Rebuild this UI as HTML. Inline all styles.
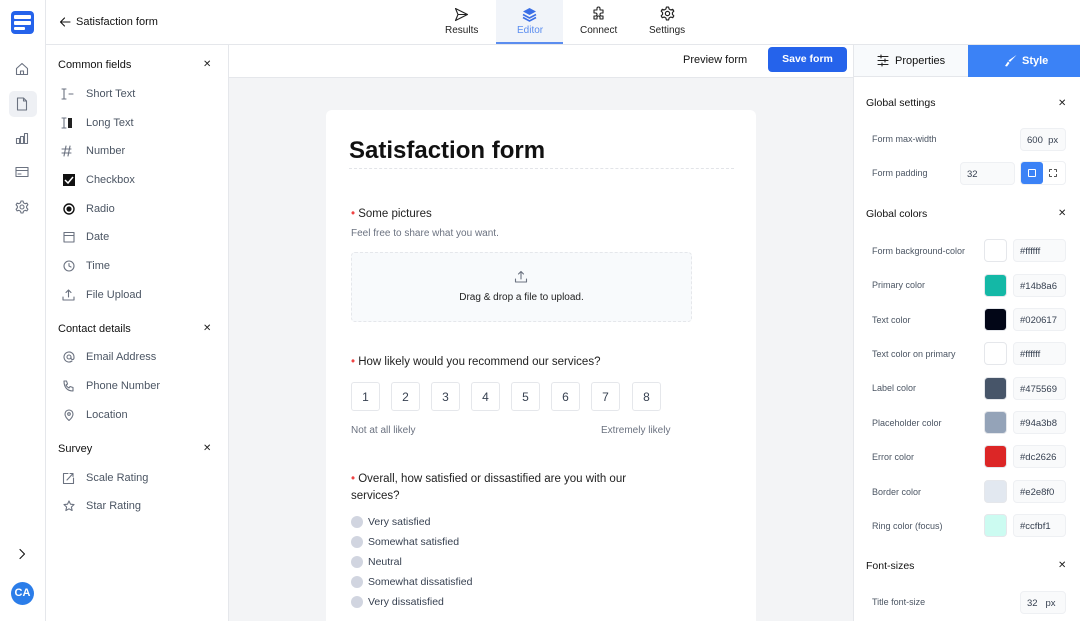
<!DOCTYPE html>
<html><head><meta charset="utf-8"><style>
*{box-sizing:border-box;margin:0;padding:0}
body{width:1080px;height:621px;overflow:hidden;font-family:"Liberation Sans",sans-serif;background:#fff;color:#111827;position:relative}
.a{position:absolute}
.t{font-size:11px;color:#374151;white-space:nowrap}
svg{display:block}
.ic{stroke:#6b7280;fill:none;stroke-width:1.1;stroke-linecap:round;stroke-linejoin:round}
.fld{position:absolute;left:60px;font-size:11px;color:#4b5563}
.fld span{position:absolute;left:26px;top:0;white-space:nowrap}
.x{position:absolute;font-size:10px;color:#222}
.row{position:absolute;left:872px;font-size:9px;color:#4b5563;white-space:nowrap}
.sw{position:absolute;left:984px;width:23px;height:23px;border-radius:4px;border:1px solid #e5e7eb}
.hx{position:absolute;left:1013px;width:53px;height:23px;border-radius:4px;border:1px solid #eef0f3;background:#f9fafb;font-size:9.5px;color:#374151;padding:6px 0 0 6px}
.nb{position:absolute;top:382px;width:29px;height:29px;border:1px solid #e5e7eb;border-radius:3px;font-size:12px;color:#374151;text-align:center;line-height:28px}
.rd{position:absolute;left:351px;font-size:10.5px;color:#374151}
.rd i{position:absolute;left:0;top:0;width:12px;height:12px;border-radius:50%;background:#d1d5e0}
.rd span{position:absolute;left:17px;top:0;white-space:nowrap}
</style></head><body>
<!-- rail -->
<div class="a" style="left:0;top:0;width:46px;height:621px;border-right:1px solid #e5e7eb"></div>
<div class="a" style="left:11px;top:11px;width:23px;height:23px;border-radius:4px;background:#2563eb"></div>
<div class="a" style="left:14px;top:15px;width:17px;height:4px;background:#fff;border-radius:1px"></div>
<div class="a" style="left:14px;top:21px;width:17px;height:4px;background:#fff;border-radius:1px"></div>
<div class="a" style="left:14px;top:27px;width:11px;height:3px;background:#fff;border-radius:1px"></div>
<svg class="a" style="left:15px;top:62px" width="14" height="14" viewBox="0 0 14 14"><path class="ic" d="M1.5 6.5L7 1.5l5.5 5V12.5h-11z M5.5 12.5V9h3v3.5"/></svg>
<div class="a" style="left:9px;top:91px;width:28px;height:26px;border-radius:5px;background:#eef0f4"></div>
<svg class="a" style="left:16px;top:97px" width="12" height="14" viewBox="0 0 12 14"><path class="ic" d="M1.5 1h6l3 3v9h-9z M7.5 1v3h3"/></svg>
<svg class="a" style="left:15px;top:131px" width="14" height="14" viewBox="0 0 14 14"><path class="ic" d="M1.5 12.5v-5h3v5z M5.5 12.5v-7h3v7z M9.5 12.5v-10h3v10z"/></svg>
<svg class="a" style="left:15px;top:166px" width="14" height="12" viewBox="0 0 14 12"><path class="ic" d="M1 1.5h12v9H1z M1 4.5h12 M3 8h3"/></svg>
<svg class="a" style="left:15px;top:200px" width="14" height="14" viewBox="0 0 14 14"><circle class="ic" cx="7" cy="7" r="2"/><path class="ic" d="M6 1h2l.5 1.8 1.6.9 1.8-.6 1 1.7-1.3 1.4v1.6l1.3 1.4-1 1.7-1.8-.6-1.6.9L8 13H6l-.5-1.8-1.6-.9-1.8.6-1-1.7L2.4 7.8V6.2L1.1 4.8l1-1.7 1.8.6 1.6-.9z"/></svg>
<svg class="a" style="left:18px;top:548px" width="8" height="12" viewBox="0 0 8 12"><path class="ic" d="M2 1.5l4.5 4.5L2 10.5" style="stroke:#111"/></svg>
<div class="a" style="left:11px;top:582px;width:23px;height:23px;border-radius:50%;background:#2b7de9;color:#fff;font-size:11px;font-weight:bold;text-align:center;line-height:23px">CA</div>
<!-- header -->
<div class="a" style="left:46px;top:44px;width:1034px;height:1px;background:#e5e7eb"></div>
<svg class="a" style="left:59px;top:16px" width="12" height="12" viewBox="0 0 12 12"><path class="ic" d="M11 6H1.5M5.5 2L1.5 6l4 4" style="stroke:#111"/></svg>
<div class="a t" style="left:76px;top:16px;color:#111">Satisfaction form</div>
<div class="a" style="left:496px;top:0;width:67px;height:44px;background:#f1f4f9;border-bottom:2px solid #5b8def"></div>
<svg class="a" style="left:454px;top:7px" width="15" height="15" viewBox="0 0 15 15"><path class="ic" d="M1.5 1.5l12 6-12 6 2.5-6z M4 7.5h9" style="stroke:#222"/></svg>
<div class="a" style="left:445px;top:25px;font-size:10px;color:#222">Results</div>
<svg class="a" style="left:522px;top:7px" width="15" height="15" viewBox="0 0 15 15"><path d="M7.5 1L14 4.5 7.5 8 1 4.5z" fill="#3b6fe6"/><path d="M1 7.5l6.5 3.5L14 7.5 M1 10.5L7.5 14 14 10.5" stroke="#3b6fe6" fill="none" stroke-width="1.6"/></svg>
<div class="a" style="left:517px;top:25px;font-size:10px;color:#5b8def">Editor</div>
<svg class="a" style="left:591px;top:6px" width="15" height="15" viewBox="0 0 15 15"><path class="ic" d="M3 4h3V2.5a1.5 1.5 0 013 0V4h3v3h-1.5a1.5 1.5 0 000 3H12v3H9v-1.5a1.5 1.5 0 00-3 0V13H3v-3h1.5a1.5 1.5 0 000-3H3z" style="stroke:#222"/></svg>
<div class="a" style="left:580px;top:25px;font-size:10px;color:#222">Connect</div>
<svg class="a" style="left:660px;top:6px" width="15" height="15" viewBox="0 0 14 14"><circle class="ic" cx="7" cy="7" r="2" style="stroke:#222"/><path class="ic" style="stroke:#222" d="M6 1h2l.5 1.8 1.6.9 1.8-.6 1 1.7-1.3 1.4v1.6l1.3 1.4-1 1.7-1.8-.6-1.6.9L8 13H6l-.5-1.8-1.6-.9-1.8.6-1-1.7L2.4 7.8V6.2L1.1 4.8l1-1.7 1.8.6 1.6-.9z"/></svg>
<div class="a" style="left:649px;top:25px;font-size:10px;color:#222">Settings</div>
<!-- left panel -->
<div class="a" style="left:228px;top:45px;width:1px;height:576px;background:#e5e7eb"></div>
<div class="a t" style="left:58px;top:59px;color:#111">Common fields</div><div class="x" style="left:203px;top:59px">✕</div>
<div class="fld" style="top:88px"><svg width="16" height="12" viewBox="0 0 16 12"><path class="ic" d="M2 1h4M2 11h4M4 1v10M9 6h4"/></svg><span>Short Text</span></div>
<div class="fld" style="top:117px"><svg width="16" height="12" viewBox="0 0 16 12"><path class="ic" d="M2 1h4M2 11h4M4 1v10"/><rect x="8" y="1" width="4" height="10" fill="#222"/></svg><span>Long Text</span></div>
<div class="fld" style="top:145px"><svg width="16" height="12" viewBox="0 0 16 12"><path class="ic" d="M4 11L6 1M8 11l2-10M2 4h9M2 8h9"/></svg><span>Number</span></div>
<div class="fld" style="top:174px"><svg width="16" height="12" viewBox="0 0 16 12"><rect x="3" y="0" width="12" height="12" fill="#111"/><path d="M5 6l3 3 5-6" stroke="#fff" stroke-width="1.5" fill="none"/></svg><span>Checkbox</span></div>
<div class="fld" style="top:203px"><svg width="16" height="12" viewBox="0 0 16 12"><circle cx="9" cy="6" r="5" stroke="#111" stroke-width="1.4" fill="none"/><circle cx="9" cy="6" r="2.6" fill="#111"/></svg><span>Radio</span></div>
<div class="fld" style="top:231px"><svg width="16" height="12" viewBox="0 0 16 12"><path class="ic" d="M4 1.5h10v9.5H4z M4 4.5h10"/></svg><span>Date</span></div>
<div class="fld" style="top:260px"><svg width="16" height="12" viewBox="0 0 16 12"><circle class="ic" cx="9" cy="6" r="5"/><path class="ic" d="M9 3.5V6l2 1"/></svg><span>Time</span></div>
<div class="fld" style="top:289px"><svg width="16" height="12" viewBox="0 0 16 12"><path class="ic" d="M3 8v3h11V8M8.5 8V1M6 3.5l2.5-2.5L11 3.5"/></svg><span>File Upload</span></div>
<div class="a t" style="left:58px;top:323px;color:#111">Contact details</div><div class="x" style="left:203px;top:323px">✕</div>
<div class="fld" style="top:351px"><svg width="16" height="12" viewBox="0 0 16 12"><circle class="ic" cx="9" cy="6" r="2"/><path class="ic" d="M11 6v1a1.5 1.5 0 003 0V6a5 5 0 10-2 4"/></svg><span>Email Address</span></div>
<div class="fld" style="top:380px"><svg width="16" height="12" viewBox="0 0 16 12"><path class="ic" d="M4 1h2.5l1 3-1.5 1a6 6 0 003 3l1-1.5 3 1V11c-6 0-9-4-9-10z"/></svg><span>Phone Number</span></div>
<div class="fld" style="top:409px"><svg width="16" height="12" viewBox="0 0 16 12"><path class="ic" d="M9 11.5s4-3.5 4-6.5a4 4 0 00-8 0c0 3 4 6.5 4 6.5z"/><circle class="ic" cx="9" cy="5" r="1.3"/></svg><span>Location</span></div>
<div class="a t" style="left:58px;top:443px;color:#111">Survey</div><div class="x" style="left:203px;top:443px">✕</div>
<div class="fld" style="top:472px"><svg width="16" height="12" viewBox="0 0 16 12"><path class="ic" d="M3.5 1.5v10h10V6 M8 1.5H3.5 M7 8l6-6.5M10 1.5h3v3"/></svg><span>Scale Rating</span></div>
<div class="fld" style="top:500px"><svg width="16" height="12" viewBox="0 0 16 12"><path class="ic" d="M9 1l1.5 3.2 3.5.4-2.6 2.4.7 3.5L9 8.8l-3.1 1.7.7-3.5L4 4.6l3.5-.4z"/></svg><span>Star Rating</span></div>
<!-- center -->
<div class="a" style="left:229px;top:77px;width:625px;height:544px;background:#f3f4f6;border-top:1px solid #e5e7eb"></div>
<div class="a t" style="left:683px;top:54px;color:#111">Preview form</div>
<div class="a" style="left:768px;top:47px;width:79px;height:25px;border-radius:4px;background:#2563eb;color:#fff;font-size:10.5px;font-weight:bold;text-align:center;line-height:25px">Save form</div>
<div class="a" style="left:326px;top:110px;width:430px;height:520px;background:#fff;border-radius:6px"></div>
<div class="a" style="left:349px;top:137px;font-size:24px;font-weight:bold;color:#111">Satisfaction form</div>
<div class="a" style="left:349px;top:168px;width:385px;border-top:1px dashed #e2e4e8"></div>
<div class="a" style="left:351px;top:208px;font-size:11.5px;color:#222"><span style="color:#ef4444">•</span> Some pictures</div>
<div class="a" style="left:351px;top:228px;font-size:10px;color:#6b7280">Feel free to share what you want.</div>
<div class="a" style="left:351px;top:252px;width:341px;height:70px;background:#f8fafc;border:1px dashed #e5e7eb;border-radius:4px"></div>
<svg class="a" style="left:514px;top:270px" width="14" height="14" viewBox="0 0 14 14"><path class="ic" d="M1.5 9v3h11V9M7 9V1.5M4.5 4L7 1.5 9.5 4"/></svg>
<div class="a" style="left:351px;top:292px;width:341px;text-align:center;font-size:10px;color:#222">Drag &amp; drop a file to upload.</div>
<div class="a" style="left:351px;top:356px;font-size:11.5px;color:#222"><span style="color:#ef4444">•</span> How likely would you recommend our services?</div>
<div class="nb" style="left:351px">1</div><div class="nb" style="left:391px">2</div><div class="nb" style="left:431px">3</div><div class="nb" style="left:471px">4</div><div class="nb" style="left:511px">5</div><div class="nb" style="left:551px">6</div><div class="nb" style="left:591px">7</div><div class="nb" style="left:632px">8</div>
<div class="a" style="left:351px;top:425px;font-size:10px;color:#6b7280">Not at all likely</div>
<div class="a" style="left:601px;top:425px;font-size:10px;color:#6b7280">Extremely likely</div>
<div class="a" style="left:351px;top:471px;width:320px;font-size:11.5px;color:#222;line-height:17px"><span style="color:#ef4444">•</span> Overall, how satisfied or dissastified are you with our services?</div>
<div class="rd" style="top:516px"><i></i><span>Very satisfied</span></div>
<div class="rd" style="top:536px"><i></i><span>Somewhat satisfied</span></div>
<div class="rd" style="top:556px"><i></i><span>Neutral</span></div>
<div class="rd" style="top:576px"><i></i><span>Somewhat dissatisfied</span></div>
<div class="rd" style="top:596px"><i></i><span>Very dissatisfied</span></div>
<!-- right panel -->
<div class="a" style="left:853px;top:45px;width:1px;height:576px;background:#e5e7eb"></div>
<div class="a" style="left:854px;top:45px;width:114px;height:32px;background:#f8fafc;border-bottom:1px solid #e5e7eb"></div>
<svg class="a" style="left:877px;top:54px" width="12" height="13" viewBox="0 0 12 13"><path class="ic" style="stroke:#222" d="M1 2.5h10M1 6.5h10M1 10.5h10M4 1v3M8 5v3M5 9v3"/></svg>
<div class="a" style="left:895px;top:55px;font-size:11px;color:#111">Properties</div>
<div class="a" style="left:968px;top:45px;width:112px;height:32px;background:#3b82f6"></div>
<svg class="a" style="left:1004px;top:54px" width="14" height="13" viewBox="0 0 14 13"><path d="M12.5 1L6 8l-1.5-1.5z M4 7.5l1.5 1.5L3 12.5 1 12z" fill="#fff"/></svg>
<div class="a" style="left:1022px;top:55px;font-size:11px;font-weight:bold;color:#fff">Style</div>
<div class="a t" style="left:866px;top:97px;color:#111;font-size:10.5px">Global settings</div><div class="x" style="left:1058px;top:98px">✕</div>
<div class="row" style="top:134px">Form max-width</div>
<div class="hx" style="left:1020px;top:128px;width:46px">600&nbsp; px</div>
<div class="row" style="top:168px">Form padding</div>
<div class="hx" style="left:960px;top:162px;width:55px">32</div>
<div class="a" style="left:1020px;top:161px;width:46px;height:24px;border:1px solid #eef0f3;border-radius:4px"></div>
<div class="a" style="left:1021px;top:162px;width:22px;height:22px;background:#3b82f6;border-radius:3px"></div>
<div class="a" style="left:1028px;top:169px;width:8px;height:8px;border:1.3px solid #fff;border-radius:1px"></div>
<div class="a" style="left:1049px;top:169px;width:8px;height:8px;border:1.3px dashed #555;border-radius:1px"></div>
<div class="a t" style="left:866px;top:208px;color:#111;font-size:10.5px">Global colors</div><div class="x" style="left:1058px;top:208px">✕</div>
<div class="row" style="top:246px">Form background-color</div><div class="sw" style="top:239px;background:#fff"></div><div class="hx" style="top:239px">#ffffff</div>
<div class="row" style="top:280px">Primary color</div><div class="sw" style="top:274px;background:#14b8a6"></div><div class="hx" style="top:274px">#14b8a6</div>
<div class="row" style="top:315px">Text color</div><div class="sw" style="top:308px;background:#020617"></div><div class="hx" style="top:308px">#020617</div>
<div class="row" style="top:349px">Text color on primary</div><div class="sw" style="top:342px;background:#fff"></div><div class="hx" style="top:342px">#ffffff</div>
<div class="row" style="top:383px">Label color</div><div class="sw" style="top:377px;background:#475569"></div><div class="hx" style="top:377px">#475569</div>
<div class="row" style="top:418px">Placeholder color</div><div class="sw" style="top:411px;background:#94a3b8"></div><div class="hx" style="top:411px">#94a3b8</div>
<div class="row" style="top:452px">Error color</div><div class="sw" style="top:445px;background:#dc2626"></div><div class="hx" style="top:445px">#dc2626</div>
<div class="row" style="top:487px">Border color</div><div class="sw" style="top:480px;background:#e2e8f0"></div><div class="hx" style="top:480px">#e2e8f0</div>
<div class="row" style="top:521px">Ring color (focus)</div><div class="sw" style="top:514px;background:#ccfbf1"></div><div class="hx" style="top:514px">#ccfbf1</div>
<div class="a t" style="left:866px;top:560px;color:#111;font-size:10.5px">Font-sizes</div><div class="x" style="left:1058px;top:560px">✕</div>
<div class="row" style="top:597px">Title font-size</div>
<div class="hx" style="left:1020px;top:591px;width:46px">32&nbsp;&nbsp; px</div>
</body></html>
